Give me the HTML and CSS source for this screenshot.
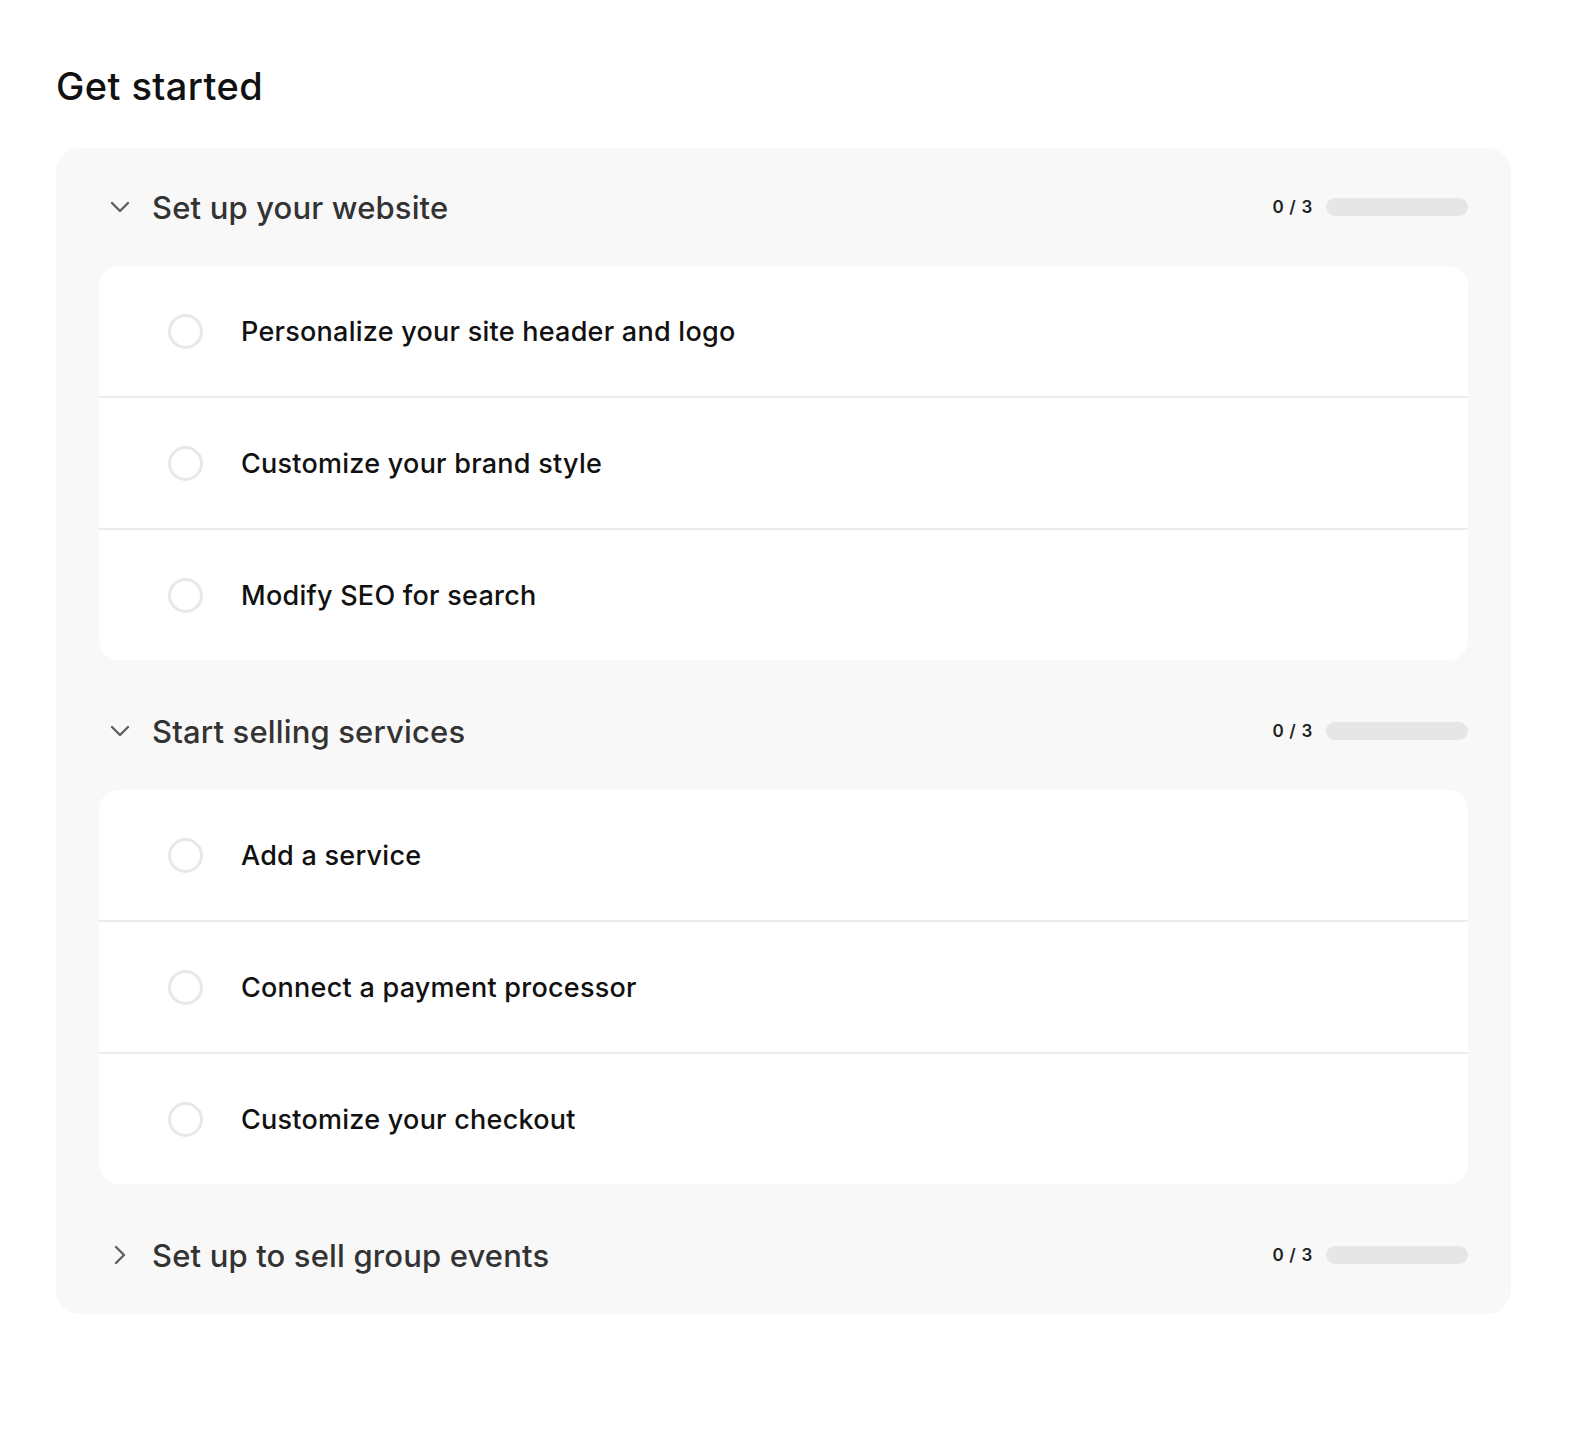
FILE: index.html
```html
<!DOCTYPE html>
<html lang="en">
<head>
<meta charset="utf-8">
<title>Get started</title>
<link rel="stylesheet" href="styles.css">
</head>
<body>
<main class="page">
  <h1 class="page-title">Get started</h1>
  <div class="panel">
    <section class="group">
      <div class="group-head">
        <svg class="chev" viewBox="0 0 20 12" width="20" height="12"><path d="M2 2l8 8 8-8" fill="none" stroke="#5f5f5f" stroke-width="2.4" stroke-linecap="round" stroke-linejoin="round"/></svg>
        <span class="group-title">Set up your website</span>
        <div class="progress"><span class="count">0 / 3</span><span class="bar"></span></div>
      </div>
      <ul class="card">
        <li class="item"><span class="check"></span><span class="label">Personalize your site header and logo</span></li>
        <li class="item"><span class="check"></span><span class="label">Customize your brand style</span></li>
        <li class="item"><span class="check"></span><span class="label">Modify SEO for search</span></li>
      </ul>
    </section>
    <section class="group">
      <div class="group-head">
        <svg class="chev" viewBox="0 0 20 12" width="20" height="12"><path d="M2 2l8 8 8-8" fill="none" stroke="#5f5f5f" stroke-width="2.4" stroke-linecap="round" stroke-linejoin="round"/></svg>
        <span class="group-title">Start selling services</span>
        <div class="progress"><span class="count">0 / 3</span><span class="bar"></span></div>
      </div>
      <ul class="card">
        <li class="item"><span class="check"></span><span class="label">Add a service</span></li>
        <li class="item"><span class="check"></span><span class="label">Connect a payment processor</span></li>
        <li class="item"><span class="check"></span><span class="label">Customize your checkout</span></li>
      </ul>
    </section>
    <section class="group">
      <div class="group-head">
        <svg class="chev" viewBox="0 0 20 20" width="20" height="20"><path d="M6 2l8 8-8 8" fill="none" stroke="#5f5f5f" stroke-width="2.4" stroke-linecap="round" stroke-linejoin="round"/></svg>
        <span class="group-title">Set up to sell group events</span>
        <div class="progress"><span class="count">0 / 3</span><span class="bar"></span></div>
      </div>
    </section>
  </div>
</main>
</body>
</html>
```
FILE: styles.css
```css
* { box-sizing: border-box; }
html, body { margin: 0; padding: 0; background: #fff; }
body { font-family: Inter, "Noto Sans", "Liberation Sans", sans-serif; color: #111; }
.page { padding: 63px 77px 0 56px; }
.page-title {
  margin: 0 0 39px 0;
  font-size: 38px;
  line-height: 46px;
  font-weight: 500;
  letter-spacing: 0.4px;
  color: #111;
}
.panel {
  background: #f8f8f8;
  border-radius: 24px;
  padding: 0 43px;
  display: flex;
  flex-direction: column;
  gap: 12px;
}
.group-head {
  height: 118px;
  display: flex;
  align-items: center;
  padding-left: 11px;
}
.chev { flex: none; margin-right: 22px; }
.group-title {
  font-size: 31px;
  font-weight: 500;
  color: #333;
  letter-spacing: 0.15px;
}
.progress {
  margin-left: auto;
  display: flex;
  align-items: center;
  gap: 13px;
}
.count { font-size: 17px; font-weight: 600; color: #222; letter-spacing: 0.7px; }
.bar {
  width: 142px;
  height: 18px;
  border-radius: 9px;
  background: #e6e6e6;
}
.card {
  list-style: none;
  margin: 0;
  padding: 0;
  background: #fff;
  border-radius: 20px;
}
.item {
  height: 130px;
  display: flex;
  align-items: center;
  padding-left: 69px;
}
.item + .item { border-top: 2px solid #ebebeb; height: 132px; }
.check {
  width: 35px;
  height: 35px;
  border-radius: 50%;
  border: 3px solid #e8e8e8;
  flex: none;
  margin-right: 38px;
}
.label {
  font-size: 27px;
  font-weight: 500;
  color: #111;
  letter-spacing: 0.25px;
}
```
